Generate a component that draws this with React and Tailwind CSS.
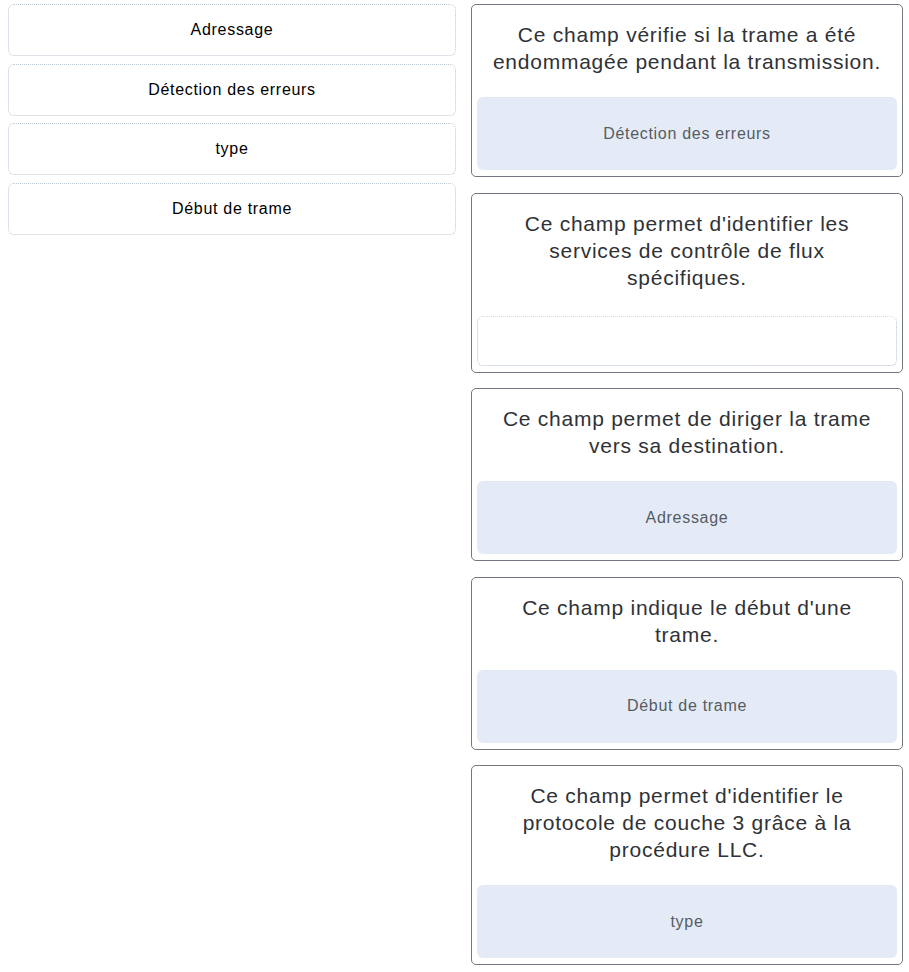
import React from 'react';

const choices = ['Adressage', 'Détection des erreurs', 'type', 'Début de trame'];

const questions = [
  { text: 'Ce champ vérifie si la trame a été endommagée pendant la transmission.', answer: 'Détection des erreurs' },
  { text: "Ce champ permet d'identifier les services de contrôle de flux spécifiques.", answer: null },
  { text: 'Ce champ permet de diriger la trame vers sa destination.', answer: 'Adressage' },
  { text: "Ce champ indique le début d'une trame.", answer: 'Début de trame' },
  { text: "Ce champ permet d'identifier le protocole de couche 3 grâce à la procédure LLC.", answer: 'type' },
];

function DropZone({ answer }) {
  if (!answer) {
    return (
      <div className="mt-[25px] h-[50px] rounded-[6px] border border-dotted border-[#b4c0d2] border-t-[#ecc8f2]" />
    );
  }
  return (
    <div className="mt-[22px] h-[73px] rounded-[6px] border border-dotted border-[#e6eaf4] border-t-[#f0daf4] bg-[#e4ebf6] flex items-center justify-center text-[16px] tracking-[0.7px] text-[#555b63]">
      {answer}
    </div>
  );
}

export default function App() {
  return (
    <div className="min-h-screen bg-white font-['Liberation_Sans',Arial,sans-serif] flex gap-[15px] pl-[8px] pr-[6px] pt-[4px]">
      {/* Choices */}
      <div className="w-[448px] flex flex-col gap-[7.5px]">
        {choices.map((c) => (
          <div
            key={c}
            className="h-[52px] rounded-[6px] border border-dotted border-[#b9c6d6] flex items-center justify-center text-[16px] tracking-[0.7px] text-black"
          >
            {c}
          </div>
        ))}
      </div>

      {/* Questions */}
      <div className="w-[432px] flex flex-col gap-[15.5px] pb-[6px]">
        {questions.map((q, i) => (
          <div key={i} className="rounded-[5px] border border-[#737880] px-[5px] pt-[16px] pb-[6px]">
            <p className="px-[14px] text-center text-[21px] leading-[27px] tracking-[0.75px] text-[#2f3236]">{q.text}</p>
            <DropZone answer={q.answer} />
          </div>
        ))}
      </div>
    </div>
  );
}
